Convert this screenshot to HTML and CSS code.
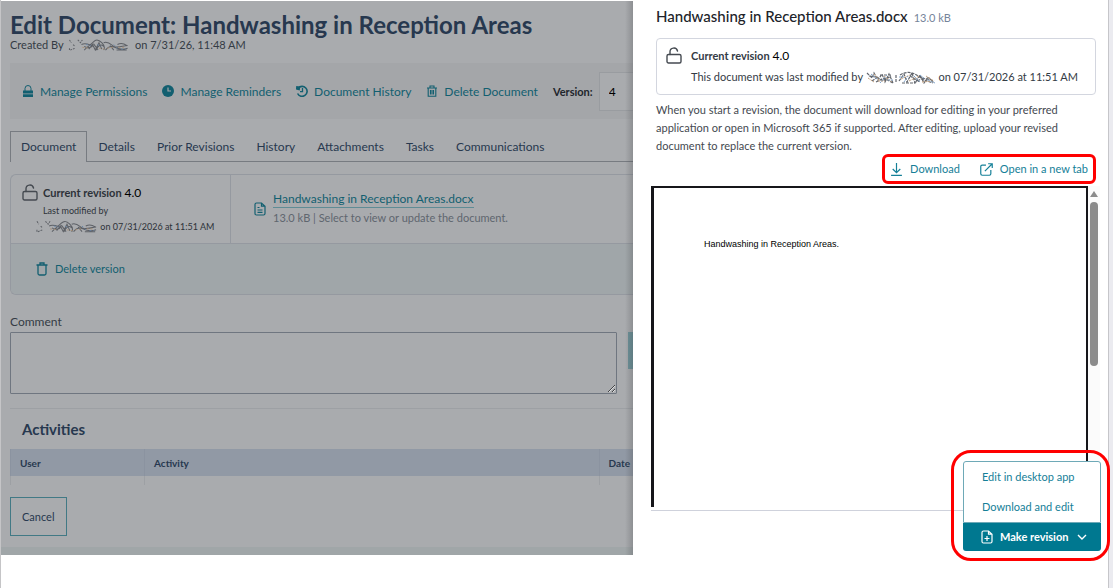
FILE: index.html
```html
<!DOCTYPE html>
<html lang="en">
<head>
    <meta charset="UTF-8">
    <meta name="viewport" content="width=device-width, initial-scale=1.0">
    <title>Edit Document</title>
    <link rel="stylesheet" href="styles.css">
</head>
<body>
    <!-- shared shapes -->
    <svg class="defs" width="0" height="0" aria-hidden="true">
        <symbol id="unlock" viewBox="0 0 16 17">
            <rect x="1" y="7.5" width="14" height="8.5" rx="1.5" fill="none" stroke="currentColor" stroke-width="1.4"/>
            <path d="M4 7.5V5a3.8 3.8 0 0 1 7.5-1" fill="none" stroke="currentColor" stroke-width="1.4" stroke-linecap="round"/>
        </symbol>
        <symbol id="scribble" viewBox="0 0 66 13">
            <g fill="none" stroke="currentColor" stroke-width="1.1">
                <path d="M1 1l2 3M1 12V9M2 12l5-2M5 6l2 2M10 1l3 3 2-3" stroke-dasharray="2 1"/>
                <path d="M14 6c4-2 8 0 11 1s-4 4-8 1M17 12c3-3 7-6 10-9s6-2 9 1 4 5 2 8M22 11l4-5 3 6 4-8 3 7M27 5l5 7M30 12c2-5 5-7 8-4"/>
                <path d="M38 4c5-2 8 2 11 4s8 0 15-1M40 12c3-4 6-5 10-3s8 3 14 1M45 7l4 5M53 6c4-2 7-1 10 1M52 12h11"/>
            </g>
            <path d="M15 9l8 1M33 10l6 1M42 10l6-1M54 9h8" stroke="#a98f74" fill="none" stroke-dasharray="2 2"/>
            <path d="M19 6l5 1M31 6l4 2M49 6l4 4M57 11h5" stroke="#6684a6" fill="none" stroke-dasharray="2 2"/>
        </symbol>
        <symbol id="scribble-dense" viewBox="0 0 70 13">
            <g fill="none" stroke="#62666d" stroke-width="1.2" stroke-dasharray="3 1">
                <path d="M1 2l5 5 2-5 4 7 4-6 3 8 4-8 4 9M3 5l8 1 6 4 8-5M10 11l8-4 9 5M30 4v8M14 4h12M6 10l6-4"/>
                <path d="M33 10l5-7 3 8 5-9 3 10 5-8 4 8 4-6 6 6M34 4c6-4 13-3 18 1s11 2 16 5M36 12h12l7-4 12 4M44 5l10 6"/>
            </g>
            <path d="M2 7l6 4M8 3l5 6M18 5l8 6M35 8l9-4M43 10l10-5M56 11l11-1M60 5l6 4M12 10h7" stroke="#c3a17e" fill="none" stroke-dasharray="2 1"/>
            <path d="M5 3l6 5M14 12l7-8M22 9h6M38 11l4-6M48 5l6 6M54 4l5 4M62 9l7 3M33 6h6" stroke="#7fa3cb" fill="none" stroke-dasharray="2 1"/>
        </symbol>
    </svg>

    <div class="shell">
        <main class="page">
            <h1>Edit Document: Handwashing in Reception Areas</h1>
            <p class="created">Created By <svg class="scribble"><use href="#scribble"/></svg> on 7/31/26, 11:48 AM</p>

            <div class="toolbar">
                <a href="#">
                    <svg viewBox="0 0 12 12"><path d="M3 6V3.5a3 3 0 0 1 6 0V6" fill="none" stroke="currentColor"/><path d="M1 5.5h10v3H1zM1 9.2h10V12H1z" fill="currentColor"/></svg>
                    Manage Permissions
                </a>
                <a href="#">
                    <svg viewBox="0 0 12 12"><circle cx="6" cy="6" r="6" fill="currentColor"/><path d="M6 2.5V6h3" fill="none" stroke="#a4a6a9" stroke-width="1.2"/></svg>
                    Manage Reminders
                </a>
                <a href="#">
                    <svg viewBox="0 0 12 12"><path d="M2.2 3.2A5 5 0 1 1 1.6 8.5" fill="none" stroke="currentColor" stroke-width="1.6"/><path d="M.2 1l4 .4L3.8 5.4 0 4.6z" fill="currentColor"/><path d="M6.5 3v3.6H4" fill="none" stroke="currentColor" stroke-width="1.3"/></svg>
                    Document History
                </a>
                <a href="#">
                    <svg viewBox="0 0 12 12"><path d="M1 3h10M4 2.5V1h4v1.5M2.2 3v8.3h7.6V3M4.5 5v4.5M6 5v4.5M7.5 5v4.5" fill="none" stroke="currentColor" stroke-width="1.1"/></svg>
                    Delete Document
                </a>
                <label for="version">Version:</label>
                <select id="version"><option>4</option></select>
            </div>

            <nav class="tabs">
                <a class="active" href="#">Document</a>
                <a href="#">Details</a>
                <a href="#">Prior Revisions</a>
                <a href="#">History</a>
                <a href="#">Attachments</a>
                <a href="#">Tasks</a>
                <a href="#">Communications</a>
            </nav>

            <section class="doc-card">
                <div class="doc-row">
                    <div class="revision">
                        <svg class="lock"><use href="#unlock"/></svg>
                        <div class="revision-title"><strong>Current revision</strong> <span class="rev-number">4.0</span></div>
                        <div class="modified">Last modified by</div>
                        <div class="modified-on"><svg class="scribble"><use href="#scribble"/></svg> on 07/31/2026 at 11:51 AM</div>
                    </div>
                    <div class="file">
                        <svg class="file-icon" viewBox="0 0 12 14"><path d="M2.5 1H7.5L11 4.2V11.5Q11 13 9.5 13H2.5Q1 13 1 11.5V2.5Q1 1 2.5 1zM7.5 1v3.2H11M3.5 5.5h2M3.5 8h5M3.5 10.3h5" fill="none" stroke="currentColor" stroke-width="1.2"/></svg>
                        <div>
                            <a class="file-link" href="#">Handwashing in Reception Areas.docx</a>
                            <div class="file-note">13.0 kB | Select to view or update the document.</div>
                        </div>
                    </div>
                </div>
                <div class="doc-footer">
                    <button class="link-btn">
                        <svg viewBox="0 0 12 14"><path d="M.5 3h11M4 3V1h4v2M2 3v8.5Q2 13 3.5 13h5Q10 13 10 11.5V3" fill="none" stroke="currentColor" stroke-width="1.3"/></svg>
                        Delete version
                    </button>
                </div>
            </section>

            <label class="comment-label" for="comment">Comment</label>
            <div class="comment-row">
                <textarea id="comment"></textarea>
                <button class="add-btn" aria-label="Add comment"></button>
            </div>

            <section class="activities">
                <h2>Activities</h2>
                <table>
                    <thead>
                        <tr><th class="col-user">User</th><th>Activity</th><th class="col-date">Date</th></tr>
                    </thead>
                    <tbody>
                        <tr><td></td><td></td><td></td></tr>
                    </tbody>
                </table>
            </section>

            <button class="cancel-btn">Cancel</button>
            <div class="page-end"></div>
        </main>

        <aside class="drawer">
            <header class="drawer-header">
                <h2>Handwashing in Reception Areas.docx</h2>
                <span>13.0 kB</span>
            </header>
            <div class="status">
                <svg class="lock"><use href="#unlock"/></svg>
                <div>
                    <div class="revision-title"><strong>Current revision</strong> <span class="rev-number">4.0</span></div>
                    <div class="status-text">This document was last modified by <svg class="scribble"><use href="#scribble-dense"/></svg> on 07/31/2026 at 11:51 AM</div>
                </div>
            </div>
            <p class="help">When you start a revision, the document will download for editing in your preferred application or open in Microsoft 365 if supported. After editing, upload your revised document to replace the current version.</p>
            <div class="actions">
                <a href="#">
                    <svg viewBox="0 0 12 12"><path d="M6 0v8.5M2.5 5.5L6 9l3.5-3.5M1 11.4h10" fill="none" stroke="currentColor" stroke-width="1.1"/></svg>
                    Download
                </a>
                <a href="#">
                    <svg viewBox="0 0 12 12"><path d="M5.5 2H2Q.7 2 .7 3.3V10Q.7 11.3 2 11.3H8.7Q10 11.3 10 10V6.5M7.5.7h3.8v3.8M11.3.7L4.5 7.5" fill="none" stroke="currentColor" stroke-width="1.1"/></svg>
                    Open in a new tab
                </a>
            </div>
            <div class="viewer">
                <div class="sheet"><p>Handwashing in Reception Areas.</p></div>
                <div class="scrollbar"><div class="scroll-up"></div><div class="thumb"></div></div>
            </div>
            <div class="revise">
                <div class="menu">
                    <button>Edit in desktop app</button>
                    <button>Download and edit</button>
                </div>
                <button class="revise-btn">
                    <svg class="new-file" viewBox="0 0 12 14"><path d="M2.5 1H7.5L11 4.2V11.5Q11 13 9.5 13H2.5Q1 13 1 11.5V2.5Q1 1 2.5 1zM7.5 1v3.2H11M6 6v5M3.5 8.5h5" fill="none" stroke="currentColor" stroke-width="1.2"/></svg>
                    Make revision
                    <svg class="chevron" viewBox="0 0 10 6"><path d="M1 1l4 4 4-4" fill="none" stroke="currentColor" stroke-width="1.4"/></svg>
                </button>
            </div>
        </aside>
    </div>
</body>
</html>
```
FILE: styles.css
```css
* {
    box-sizing: border-box;
}
body {
    margin: 0;
    font-family: Lato, sans-serif;
    font-size: 12px;
    color: #343b45;
    background: #fff;
}
h1, h2, p {
    margin: 0;
}
a {
    text-decoration: none;
}
button, select, textarea {
    font-family: inherit;
    font-size: 12px;
}
button {
    cursor: pointer;
}
svg {
    flex: none;
}
.defs {
    position: absolute;
}
.shell {
    display: flex;
    align-items: flex-start;
    min-height: 100vh;
    border-left: 1px solid #c5c5c7;
    border-right: 4px solid #ebebf0;
}

/* dimmed page */
.page {
    position: relative;
    flex: 1;
    min-width: 0;
    margin-top: 1px;
    padding: 9px 0 0 9px;
    overflow: hidden;
    background: #a9abae;
}
.page::after {
    content: "";
    position: absolute;
    top: 0;
    right: 0;
    bottom: 0;
    width: 8px;
    background: linear-gradient(to right, rgba(60, 62, 66, 0), rgba(60, 62, 66, 0.25));
    pointer-events: none;
}
h1 {
    font-size: 24px;
    line-height: 29px;
    color: #27384f;
    white-space: nowrap;
}
.created {
    font-size: 11px;
    line-height: 12px;
    white-space: nowrap;
}
.scribble {
    width: 66px;
    height: 13px;
    vertical-align: -3px;
    color: #5d6066;
}
.created .scribble {
    height: 12px;
    vertical-align: top;
}
.toolbar {
    display: flex;
    align-items: center;
    gap: 15px;
    height: 56px;
    margin-top: 12px;
    padding-left: 12px;
    background: #a4a6a9;
    white-space: nowrap;
}
.toolbar a {
    display: flex;
    align-items: center;
    gap: 6px;
    color: #125f70;
}
.toolbar svg {
    width: 12px;
    height: 12px;
}
.toolbar label {
    font-size: 11px;
    font-weight: bold;
    color: #20252c;
}
.toolbar select {
    flex: 1;
    min-width: 0;
    height: 39px;
    margin-left: -9px;
    padding-left: 9px;
    border: 1px solid #999ca0;
    border-right: 0;
    background: #a9abae;
    color: #000;
    appearance: none;
}
.tabs {
    display: flex;
    margin-top: 12px;
    border-bottom: 1px solid #777b81;
    white-space: nowrap;
}
.tabs a {
    padding: 6px 10px;
    border: 1px solid transparent;
    border-bottom: 0;
    line-height: 17px;
    color: #27384f;
}
.tabs .active {
    margin-bottom: -1px;
    padding-bottom: 7px;
    border-color: #777b81;
    background: #a9abae;
}
.doc-card {
    margin-top: 12px;
    border: 1px solid #9599a0;
    border-right: 0;
    border-radius: 6px 0 0 6px;
    overflow: hidden;
    white-space: nowrap;
}
.doc-row {
    display: flex;
}
.revision {
    display: grid;
    grid-template-columns: 32px 1fr;
    flex: none;
    width: 220px;
    padding: 9px 0;
    border-right: 1px solid #9599a0;
    color: #2d3239;
}
.lock {
    width: 16px;
    height: 17px;
    color: #454a51;
}
.revision .lock {
    margin-left: 11px;
}
.revision-title {
    font-size: 11px;
    line-height: 18px;
}
.rev-number {
    font-size: 12px;
    color: #000;
}
.modified {
    grid-column: 2;
    font-size: 9px;
    line-height: 17px;
}
.modified-on {
    grid-column: 1 / 3;
    padding-left: 25px;
    font-size: 9px;
    line-height: 15px;
}
.modified-on .scribble {
    width: 62px;
}
.file {
    display: flex;
    align-items: center;
    gap: 7px;
    padding-left: 23px;
    color: #5f666f;
}
.file-icon {
    width: 12px;
    height: 14px;
    color: #125f70;
}
.file-link {
    display: inline-block;
    border-bottom: 1px solid #5f8c95;
    line-height: 17px;
    color: #125f70;
}
.file-note {
    font-size: 11px;
    line-height: 20px;
}
.doc-footer {
    padding: 16px 25px;
    border-top: 1px solid #9599a0;
    background: #a0a6a9;
}
.link-btn {
    display: flex;
    align-items: center;
    gap: 7px;
    padding: 0;
    border: 0;
    background: none;
    font-size: 11px;
    line-height: 18px;
    color: #125f70;
}
.link-btn svg {
    width: 12px;
    height: 14px;
}
.comment-label {
    display: block;
    margin-top: 17px;
    line-height: 20px;
}
.comment-row {
    display: flex;
    align-items: flex-start;
    gap: 11px;
}
textarea {
    flex: 1;
    height: 62px;
    border: 1px solid #6f7680;
    border-radius: 1px;
    background: #a9abae;
}
.add-btn {
    width: 5px;
    height: 37px;
    padding: 0;
    border: 0;
    background: #6c9198;
}
.activities {
    margin-top: 14px;
    border-top: 1px solid #9da0a4;
}
.activities h2 {
    padding: 10px 12px;
    font-size: 15px;
    line-height: 20px;
    color: #27384f;
}
table {
    width: 100%;
    table-layout: fixed;
    border-collapse: collapse;
}
th {
    height: 27px;
    padding: 0 0 0 9px;
    border-left: 1px solid #8b93a0;
    background: #9199a5;
    font-size: 10px;
    text-align: left;
    color: #27384f;
}
td {
    height: 9px;
    padding: 0;
    border-left: 1px solid #9da0a4;
}
.col-user {
    width: 134px;
}
.col-date {
    width: 34px;
}
.cancel-btn {
    display: block;
    margin: 12px 0 11px;
    padding: 10px 11px;
    border: 1px solid #417985;
    background: none;
    font-size: 11px;
    line-height: 17px;
    color: #27384f;
}
.page-end {
    height: 8px;
    margin-left: -9px;
    background: #a0a6a8;
}

/* preview drawer */
.drawer {
    position: relative;
    align-self: stretch;
    flex: 0 0 476px;
    min-width: 0;
    padding: 6px 12px 0 18px;
    border-right: 1px solid #c6c6ca;
    background: #fff;
}
.drawer-header {
    display: flex;
    align-items: baseline;
    gap: 6px;
    padding-left: 5px;
    line-height: 20px;
}
.drawer-header h2 {
    font-size: 15px;
    font-weight: 500;
    color: #212329;
}
.drawer-header span {
    font-size: 11px;
    color: #75849a;
}
.status {
    display: flex;
    gap: 9px;
    margin: 10px 0 6px 5px;
    padding: 8px 7px 6px 9px;
    border: 1px solid #d3d6df;
    border-radius: 4px;
    white-space: nowrap;
}
.status-text {
    font-size: 11px;
    line-height: 23px;
}
.status .scribble {
    width: 70px;
}
.help {
    padding: 0 20px 0 5px;
    font-size: 11px;
    line-height: 18px;
    color: #444950;
}
.actions {
    display: flex;
    gap: 20px;
    width: fit-content;
    margin: -1px 0 2px auto;
    padding: 3px 5px;
    border: 3px solid #f00;
    border-radius: 6px;
}
.actions a {
    display: flex;
    align-items: center;
    gap: 7px;
    font-size: 11px;
    line-height: 18px;
    color: #158098;
}
.actions svg {
    width: 13px;
    height: 13px;
}
.viewer {
    display: flex;
    border-bottom: 1px solid #cfd2dc;
    padding-bottom: 3px;
}
.sheet {
    flex: 1;
    min-height: 321px;
    padding: 48px 50px;
    border: 2px solid #16161a;
    border-left-width: 3px;
    border-bottom: 0;
    font-family: "Liberation Sans", sans-serif;
    font-size: 9px;
    line-height: 16px;
    color: #000;
}
.scrollbar {
    flex: none;
    width: 12px;
    margin-right: -4px;
    padding: 5px 2px;
    background: #fbfbfb;
}
.scroll-up {
    border: 4px solid transparent;
    border-top: 0;
    border-bottom: 6px solid #8b8b8b;
}
.thumb {
    height: 164px;
    margin-top: 5px;
    border-radius: 4px;
    background: #8b8b8b;
}
.revise {
    position: absolute;
    right: -2px;
    bottom: 27px;
    width: 159px;
    padding: 8px 6px 7px 9px;
    border: 3px solid #f00;
    border-radius: 20px;
}
.menu {
    border: 1px solid #6ea9b7;
    border-radius: 3px 3px 0 0;
    background: #fff;
}
.menu button {
    display: block;
    width: 100%;
    padding: 6px 18px;
    border: 0;
    background: none;
    font-size: 11px;
    line-height: 18px;
    color: #158098;
    text-align: left;
    white-space: nowrap;
}
.revise-btn {
    display: flex;
    align-items: center;
    gap: 7px;
    width: 100%;
    padding: 5px 14px 5px 18px;
    border: 0;
    border-radius: 0 0 3px 3px;
    background: #007890;
    color: #fff;
    font-size: 11px;
    font-weight: bold;
    line-height: 18px;
    white-space: nowrap;
}
.new-file {
    width: 12px;
    height: 14px;
}
.chevron {
    width: 10px;
    height: 6px;
    margin-left: auto;
}
```
